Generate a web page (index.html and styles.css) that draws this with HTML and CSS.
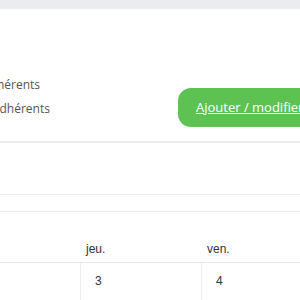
FILE: index.html
```html
<!DOCTYPE html>
<html lang="fr">
<head>
    <meta charset="UTF-8">
    <meta name="viewport" content="width=device-width, initial-scale=1.0">
    <title>Adhérents</title>
    <link rel="stylesheet" href="styles.css">
</head>
<body>
    <div class="topbar"></div>

    <section class="card">
        <div class="stats">
            <div class="stat stat-first">Total adhérents</div>
            <div class="stat stat-second">Nouveaux adhérents</div>
        </div>
        <a class="btn" href="#">Ajouter / modifier des adhérents</a>
    </section>

    <div class="filters"></div>

    <div class="calendar">
        <div class="cal-head">mer.</div>
        <div class="cal-head">jeu.</div>
        <div class="cal-head">ven.</div>
        <div class="cal-day">2</div>
        <div class="cal-day">3</div>
        <div class="cal-day">4</div>
    </div>
</body>
</html>
```

FILE: styles.css
```css
body {
    margin: 0;
    width: 300px;
    height: 300px;
    overflow: hidden;
    background-color: #ffffff;
    font-family: "Open Sans", "Liberation Sans", sans-serif;
}
.topbar {
    height: 9px;
    background-color: #ebecf0;
}
.card {
    display: flex;
    align-items: flex-start;
    width: 520px;
    margin-left: -67px;
    padding: 64px 0 14px;
    background-color: #ffffff;
    border-bottom: 2px solid #eeeeee;
}
.stats {
    width: 245px;
}
.stat {
    height: 24px;
    line-height: 24px;
    font-size: 12px;
    color: #555555;
    white-space: nowrap;
}
.stat-first {
    margin-left: 19px;
}
.btn {
    flex-shrink: 0;
    margin-top: 15px;
    height: 39px;
    line-height: 39px;
    padding: 0 18px;
    border-radius: 13px;
    background-color: #5ec253;
    color: #ffffff;
    font-size: 13px;
    white-space: nowrap;
}
.filters {
    margin-top: 51px;
    height: 16px;
    border-top: 1px solid #ececec;
    border-bottom: 1px solid #ececec;
}
.calendar {
    display: grid;
    grid-template-columns: repeat(3, 121px);
    margin-left: -41px;
    font-family: "Liberation Sans", Arial, sans-serif;
    font-size: 12px;
    color: #333333;
}
.cal-head {
    height: 14px;
    line-height: 14px;
    padding: 30px 6px 6px;
    border-bottom: 1px solid #e6e6e6;
}
.cal-day {
    height: 40px;
    line-height: 14px;
    padding: 11px 14px 0;
    border-left: 1px solid #eeeeee;
}
```
